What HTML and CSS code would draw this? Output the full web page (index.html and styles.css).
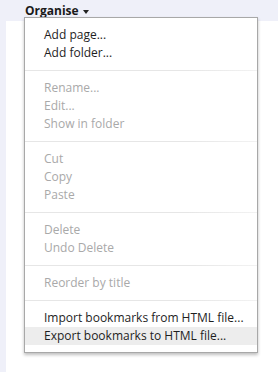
FILE: index.html
```html
<!DOCTYPE html>
<html>
<head>
<meta charset="utf-8">
<link rel="stylesheet" href="styles.css">
</head>
<body>
<div class="page">
  <div class="topbar">
    <span class="organise">Organise <span class="caret"></span></span>
  </div>
  <div class="side"></div>
  <div class="menu">
    <div class="item">Add page...</div>
    <div class="item">Add folder...</div>
    <div class="sep"></div>
    <div class="item disabled">Rename...</div>
    <div class="item disabled">Edit...</div>
    <div class="item disabled">Show in folder</div>
    <div class="sep"></div>
    <div class="item disabled">Cut</div>
    <div class="item disabled">Copy</div>
    <div class="item disabled">Paste</div>
    <div class="sep"></div>
    <div class="item disabled">Delete</div>
    <div class="item disabled">Undo Delete</div>
    <div class="sep"></div>
    <div class="item disabled">Reorder by title</div>
    <div class="sep"></div>
    <div class="item">Import bookmarks from HTML file...</div>
    <div class="item hover">Export bookmarks to HTML file...</div>
  </div>
</div>
</body>
</html>
```
FILE: styles.css
```css
* { box-sizing: border-box; }
html, body { margin: 0; padding: 0; }
body {
  width: 278px;
  height: 372px;
  background: #ffffff;
  font-family: "Open Sans", "DejaVu Sans", sans-serif;
  font-size: 12px;
  color: #222;
  overflow: hidden;
}
.page {
  position: relative;
  width: 278px;
  height: 372px;
}
.topbar {
  height: 21px;
  background: #eff0f9;
  padding-left: 25px;
  padding-top: 2px;
}
.side {
  position: absolute;
  left: 0;
  top: 21px;
  width: 6px;
  bottom: 0;
  background: #eff0f9;
}
.organise {
  font-weight: bold;
  font-size: 12px;
  line-height: 16px;
  color: #1a1a1a;
  display: inline-flex;
  align-items: center;
  gap: 4px;
}
.caret {
  display: inline-block;
  width: 0;
  height: 0;
  border-left: 3.5px solid transparent;
  border-right: 3.5px solid transparent;
  border-top: 4px solid #222;
  margin-top: 1px;
}
.menu {
  position: absolute;
  left: 24px;
  top: 17px;
  width: 234px;
  height: 336px;
  background: #fff;
  border: 1px solid #a8a8a8;
  box-shadow: 0 2px 3px rgba(0,0,0,0.25);
  padding: 8px 0 7px 0;
}
.item {
  height: 18px;
  line-height: 18px;
  padding-left: 19px;
  color: #1e1e1e;
  white-space: nowrap;
}
.item.disabled { color: #a9a9a9; }
.item.hover { background: #ededed; }
.sep {
  height: 1px;
  margin: 8px 0;
  background: linear-gradient(to right, #e6e6e6, #e6e6e6 70%, #f2f2f2);
}
```
